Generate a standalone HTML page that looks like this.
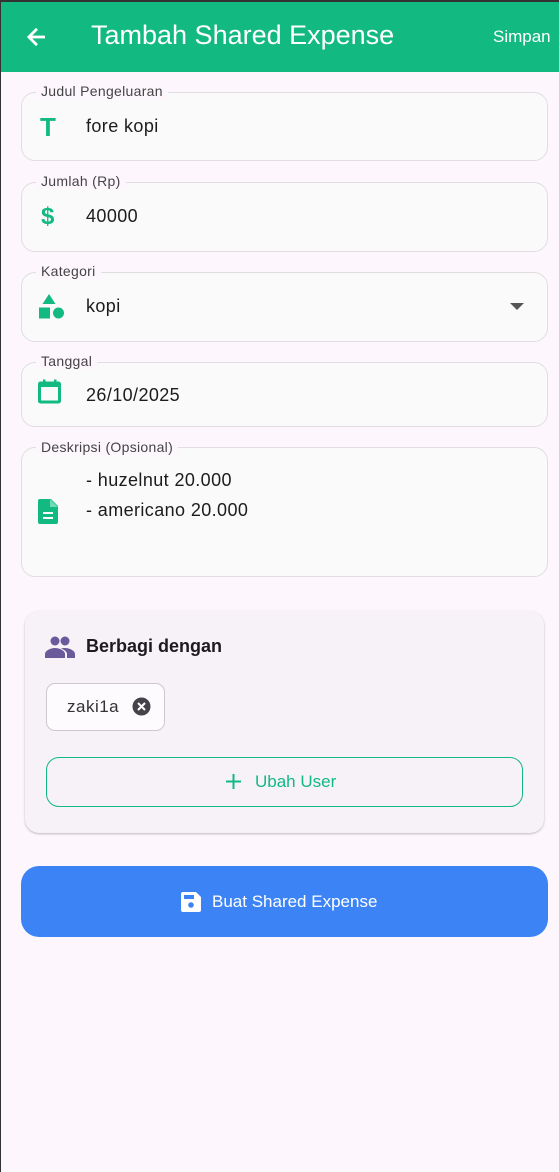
<!DOCTYPE html>
<html><head><meta charset="utf-8"><style>
*{margin:0;padding:0;box-sizing:border-box}
body{width:559px;height:1172px;background:#fdf7fd;font-family:"Liberation Sans",sans-serif;position:relative;overflow:hidden}
.a{position:absolute}
.hdr{left:0;top:0;width:559px;height:72px;background:#12b981;color:#fff}
.f{left:21px;width:527px;border:1.5px solid #e1dde1;border-radius:14px;background:#fafafa}
.lb{font-size:14px;color:#444;background:#fdf7fd;padding:0 5px;left:36px;letter-spacing:.3px}
.tx{font-size:18px;color:#1d1b1e;left:86px;letter-spacing:.4px}
</style></head><body>
<div class="a hdr">
<svg class="a" style="left:23px;top:24px" width="26" height="26" viewBox="0 0 24 24"><path d="M20 11H7.8l5.6-5.6L12 4l-8 8 8 8 1.4-1.4L7.8 13H20z" fill="#fff" stroke="#fff" stroke-width=".6"/></svg>
<div class="a" style="left:91px;top:20px;font-size:27px">Tambah Shared Expense</div>
<div class="a" style="left:493px;top:27px;font-size:17px">Simpan</div>
</div>
<div class="a" style="left:0;top:0;width:559px;height:2px;background:#333"></div>
<div class="a" style="left:0;top:0;width:1px;height:1172px;background:#333"></div>
<div class="a f" style="top:92px;height:69px"></div>
<div class="a lb" style="top:83px">Judul Pengeluaran</div>
<div class="a" style="left:40px;top:112px;font-size:26px;font-weight:bold;color:#12b981">T</div>
<div class="a tx" style="top:116px">fore kopi</div>

<div class="a f" style="top:182px;height:70px"></div>
<div class="a lb" style="top:173px">Jumlah (Rp)</div>
<div class="a" style="left:41px;top:203px;font-size:24px;font-weight:bold;color:#12b981">$</div>
<div class="a tx" style="top:206px">40000</div>

<div class="a f" style="top:272px;height:70px"></div>
<div class="a lb" style="top:263px">Kategori</div>
<svg class="a" style="left:38px;top:294px" width="28" height="28" viewBox="0 0 28 28" fill="#12b981"><path d="M11 0l6.5 10H4.5z"/><rect x="1" y="13.5" width="11" height="11"/><circle cx="20.5" cy="19" r="5.5"/></svg>
<div class="a tx" style="top:296px">kopi</div>
<svg class="a" style="left:510px;top:303px" width="14" height="8"><path d="M0 0h14L7 7z" fill="#555"/></svg>

<div class="a f" style="top:362px;height:65px"></div>
<div class="a lb" style="top:353px">Tanggal</div>
<svg class="a" style="left:36px;top:378px" width="26" height="26" viewBox="0 0 26 26"><rect x="3.5" y="5" width="20" height="19" rx="1" fill="none" stroke="#12b981" stroke-width="3"/><rect x="3" y="4" width="21" height="5" fill="#12b981"/><rect x="7" y="1.5" width="2.5" height="4" fill="#12b981"/><rect x="18" y="1.5" width="2.5" height="4" fill="#12b981"/></svg>
<div class="a tx" style="top:385px">26/10/2025</div>

<div class="a f" style="top:447px;height:130px"></div>
<div class="a lb" style="top:439px">Deskripsi (Opsional)</div>
<svg class="a" style="left:38px;top:499px" width="20" height="25" viewBox="0 0 20 25"><path d="M2 0h11l7 7v16a2 2 0 0 1-2 2H2a2 2 0 0 1-2-2V2a2 2 0 0 1 2-2z" fill="#12b981"/><path d="M12 0v8h8" fill="#6fdab5"/><rect x="5" y="13" width="10" height="2" fill="#fff"/><rect x="5" y="18" width="10" height="2" fill="#fff"/></svg>
<div class="a tx" style="top:465px;line-height:30px">- huzelnut 20.000<br>- americano 20.000</div>

<div class="a" style="left:25px;top:611px;width:519px;height:222px;background:#f6f2f7;border-radius:14px;box-shadow:0 1px 2px rgba(0,0,0,.25)"></div>
<svg class="a" style="left:45px;top:636px" width="30" height="22" viewBox="0 0 30 22" fill="#6a5a9c"><circle cx="10" cy="5" r="4.5"/><circle cx="20" cy="5" r="4.5"/><path d="M0 22v-4c0-3 5-6 10-6s10 3 10 6v4zM16 12.5c1-.3 2.5-.5 4-.5 5 0 10 3 10 6v4h-8v-4c0-2-2-4-6-5.5z"/></svg>
<div class="a" style="left:86px;top:636px;font-size:18px;font-weight:bold;color:#1d1b1e">Berbagi dengan</div>
<div class="a" style="left:46px;top:683px;width:119px;height:48px;border:1.5px solid #ccc8cc;border-radius:9px;background:#fdfbfd"></div>
<div class="a" style="left:67px;top:697px;font-size:17px;color:#333;letter-spacing:.5px">zaki1a</div>
<svg class="a" style="left:132px;top:697px" width="19" height="19" viewBox="0 0 19 19"><circle cx="9.5" cy="9.5" r="9" fill="#45434a"/><path d="M6 6l7 7M13 6l-7 7" stroke="#fff" stroke-width="2"/></svg>
<div class="a" style="left:46px;top:757px;width:477px;height:50px;border:1.5px solid #12b981;border-radius:13px"></div>
<svg class="a" style="left:226px;top:774px" width="15" height="15"><path d="M7.5 0v15M0 7.5h15" stroke="#12b981" stroke-width="2"/></svg>
<div class="a" style="left:255px;top:772px;font-size:17px;color:#12b981">Ubah User</div>

<div class="a" style="left:21px;top:866px;width:527px;height:71px;background:#3c83f6;border-radius:18px"></div>
<svg class="a" style="left:181px;top:892px" width="20" height="20" viewBox="0 0 20 20"><path d="M2 0h13l5 5v13a2 2 0 0 1-2 2H2a2 2 0 0 1-2-2V2a2 2 0 0 1 2-2z" fill="#fff"/><rect x="3" y="3" width="10" height="4" fill="#3c83f6"/><circle cx="10" cy="13" r="2.8" fill="#3c83f6"/></svg>
<div class="a" style="left:212px;top:892px;font-size:17px;color:#fff">Buat Shared Expense</div>
</body></html>
